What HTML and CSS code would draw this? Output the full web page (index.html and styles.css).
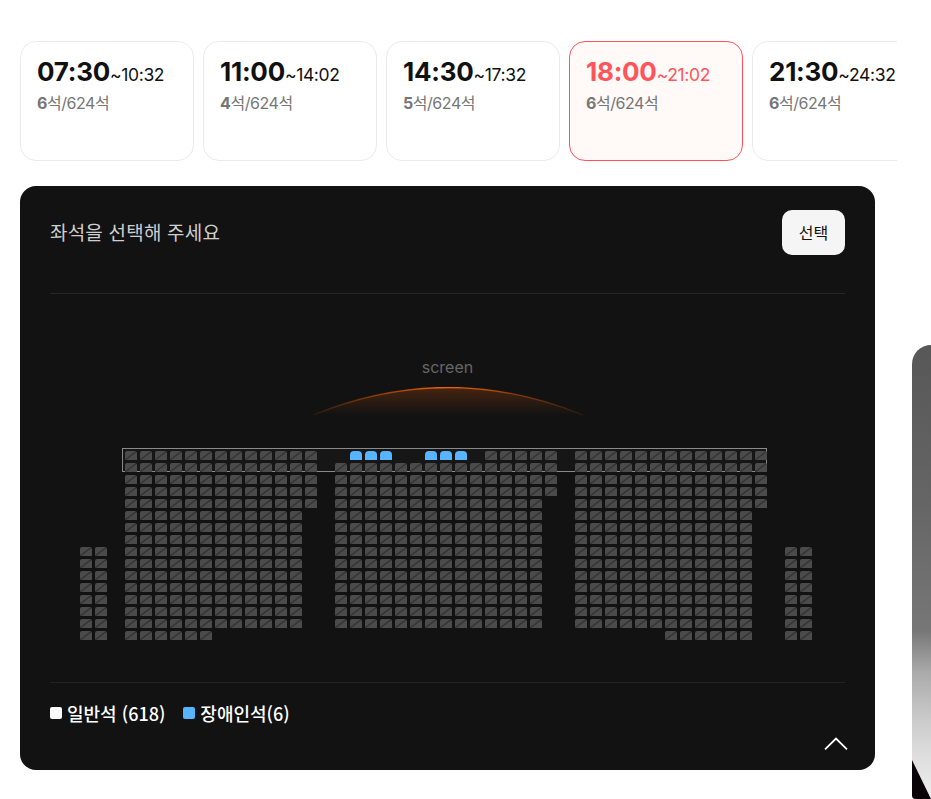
FILE: index.html
```html
<!DOCTYPE html>
<html lang="ko">
<head>
<meta charset="utf-8">
<title>좌석 선택</title>
<link rel="stylesheet" href="styles.css">
</head>
<body>
<div class="page">
  <main class="main">
    <div class="times">
      <div class="time"><p class="clock"><b>07:30</b><span>~10:32</span></p><p class="count"><b>6</b>석/624석</p></div>
      <div class="time"><p class="clock"><b>11:00</b><span>~14:02</span></p><p class="count"><b>4</b>석/624석</p></div>
      <div class="time"><p class="clock"><b>14:30</b><span>~17:32</span></p><p class="count"><b>5</b>석/624석</p></div>
      <div class="time active"><p class="clock"><b>18:00</b><span>~21:02</span></p><p class="count"><b>6</b>석/624석</p></div>
      <div class="time"><p class="clock"><b>21:30</b><span>~24:32</span></p><p class="count"><b>6</b>석/624석</p></div>
    </div>
    <section class="card">
      <header class="head">
        <h2>좌석을 선택해 주세요</h2>
        <button class="pick">선택</button>
      </header>
      <div class="hall">
        <p class="screen-label">screen</p>
        <svg class="screen" width="272" height="32" viewBox="0 0 272 32" aria-hidden="true">
          <defs>
            <linearGradient id="arc" x1="0" x2="1" y1="0" y2="0">
              <stop offset="0" stop-color="#e05a00" stop-opacity=".12"/>
              <stop offset=".25" stop-color="#d05508" stop-opacity=".6"/>
              <stop offset=".5" stop-color="#f86400"/>
              <stop offset=".75" stop-color="#d05508" stop-opacity=".6"/>
              <stop offset="1" stop-color="#e05a00" stop-opacity=".12"/>
            </linearGradient>
            <linearGradient id="glow" x1="0" x2="0" y1="0" y2="1">
              <stop offset="0" stop-color="#d85a10" stop-opacity=".26"/>
              <stop offset="1" stop-color="#d85a10" stop-opacity="0"/>
            </linearGradient>
          </defs>
          <path d="M1 28Q136 -27 271 28Z" fill="url(#glow)"/>
          <path d="M1 28Q136 -27 271 28" fill="none" stroke="url(#arc)" stroke-width="1.3"/>
        </svg>
        <div class="map">
          <div class="selection"></div>
          <div class="row"><i class="l"></i><i></i><i></i><i></i><i></i><i></i><i></i><i></i><i></i><i></i><i></i><i></i><i></i><i class="b a19"></i><i class="b"></i><i class="b"></i><i class="b a24"></i><i class="b"></i><i class="b"></i><i class="a28"></i><i></i><i></i><i></i><i></i><i class="r"></i><i></i><i></i><i></i><i></i><i></i><i></i><i></i><i></i><i></i><i></i><i></i><i></i></div>
          <div class="row"><i class="l"></i><i></i><i></i><i></i><i></i><i></i><i></i><i></i><i></i><i></i><i></i><i></i><i></i><i class="c"></i><i></i><i></i><i></i><i></i><i></i><i></i><i></i><i></i><i></i><i></i><i></i><i></i><i></i><i></i><i class="r"></i><i></i><i></i><i></i><i></i><i></i><i></i><i></i><i></i><i></i><i></i><i></i><i></i></div>
          <div class="row"><i class="l"></i><i></i><i></i><i></i><i></i><i></i><i></i><i></i><i></i><i></i><i></i><i></i><i></i><i class="c"></i><i></i><i></i><i></i><i></i><i></i><i></i><i></i><i></i><i></i><i></i><i></i><i></i><i></i><i></i><i class="r"></i><i></i><i></i><i></i><i></i><i></i><i></i><i></i><i></i><i></i><i></i><i></i><i></i></div>
          <div class="row"><i class="l"></i><i></i><i></i><i></i><i></i><i></i><i></i><i></i><i></i><i></i><i></i><i></i><i></i><i class="c"></i><i></i><i></i><i></i><i></i><i></i><i></i><i></i><i></i><i></i><i></i><i></i><i></i><i></i><i></i><i class="r"></i><i></i><i></i><i></i><i></i><i></i><i></i><i></i><i></i><i></i><i></i><i></i><i></i></div>
          <div class="row"><i class="l"></i><i></i><i></i><i></i><i></i><i></i><i></i><i></i><i></i><i></i><i></i><i></i><i></i><i class="c"></i><i></i><i></i><i></i><i></i><i></i><i></i><i></i><i></i><i></i><i></i><i></i><i></i><i></i><i class="r"></i><i></i><i></i><i></i><i></i><i></i><i></i><i></i><i></i><i></i><i></i><i></i><i></i></div>
          <div class="row"><i class="l"></i><i></i><i></i><i></i><i></i><i></i><i></i><i></i><i></i><i></i><i></i><i></i><i class="c"></i><i></i><i></i><i></i><i></i><i></i><i></i><i></i><i></i><i></i><i></i><i></i><i></i><i></i><i class="r"></i><i></i><i></i><i></i><i></i><i></i><i></i><i></i><i></i><i></i><i></i><i></i></div>
          <div class="row"><i class="l"></i><i></i><i></i><i></i><i></i><i></i><i></i><i></i><i></i><i></i><i></i><i></i><i class="c"></i><i></i><i></i><i></i><i></i><i></i><i></i><i></i><i></i><i></i><i></i><i></i><i></i><i></i><i class="r"></i><i></i><i></i><i></i><i></i><i></i><i></i><i></i><i></i><i></i><i></i><i></i></div>
          <div class="row"><i class="l"></i><i></i><i></i><i></i><i></i><i></i><i></i><i></i><i></i><i></i><i></i><i></i><i class="c"></i><i></i><i></i><i></i><i></i><i></i><i></i><i></i><i></i><i></i><i></i><i></i><i></i><i></i><i class="r"></i><i></i><i></i><i></i><i></i><i></i><i></i><i></i><i></i><i></i><i></i><i></i></div>
          <div class="row"><i></i><i></i><i class="l"></i><i></i><i></i><i></i><i></i><i></i><i></i><i></i><i></i><i></i><i></i><i></i><i class="c"></i><i></i><i></i><i></i><i></i><i></i><i></i><i></i><i></i><i></i><i></i><i></i><i></i><i></i><i class="r"></i><i></i><i></i><i></i><i></i><i></i><i></i><i></i><i></i><i></i><i></i><i></i><i class="s"></i><i></i></div>
          <div class="row"><i></i><i></i><i class="l"></i><i></i><i></i><i></i><i></i><i></i><i></i><i></i><i></i><i></i><i></i><i></i><i class="c"></i><i></i><i></i><i></i><i></i><i></i><i></i><i></i><i></i><i></i><i></i><i></i><i></i><i></i><i class="r"></i><i></i><i></i><i></i><i></i><i></i><i></i><i></i><i></i><i></i><i></i><i></i><i class="s"></i><i></i></div>
          <div class="row"><i></i><i></i><i class="l"></i><i></i><i></i><i></i><i></i><i></i><i></i><i></i><i></i><i></i><i></i><i></i><i class="c"></i><i></i><i></i><i></i><i></i><i></i><i></i><i></i><i></i><i></i><i></i><i></i><i></i><i></i><i class="r"></i><i></i><i></i><i></i><i></i><i></i><i></i><i></i><i></i><i></i><i></i><i></i><i class="s"></i><i></i></div>
          <div class="row"><i></i><i></i><i class="l"></i><i></i><i></i><i></i><i></i><i></i><i></i><i></i><i></i><i></i><i></i><i></i><i class="c"></i><i></i><i></i><i></i><i></i><i></i><i></i><i></i><i></i><i></i><i></i><i></i><i></i><i></i><i class="r"></i><i></i><i></i><i></i><i></i><i></i><i></i><i></i><i></i><i></i><i></i><i></i><i class="s"></i><i></i></div>
          <div class="row"><i></i><i></i><i class="l"></i><i></i><i></i><i></i><i></i><i></i><i></i><i></i><i></i><i></i><i></i><i></i><i class="c"></i><i></i><i></i><i></i><i></i><i></i><i></i><i></i><i></i><i></i><i></i><i></i><i></i><i></i><i class="r"></i><i></i><i></i><i></i><i></i><i></i><i></i><i></i><i></i><i></i><i></i><i></i><i class="s"></i><i></i></div>
          <div class="row"><i></i><i></i><i class="l"></i><i></i><i></i><i></i><i></i><i></i><i></i><i></i><i></i><i></i><i></i><i></i><i class="c"></i><i></i><i></i><i></i><i></i><i></i><i></i><i></i><i></i><i></i><i></i><i></i><i></i><i></i><i class="r"></i><i></i><i></i><i></i><i></i><i></i><i></i><i></i><i></i><i></i><i></i><i></i><i class="s"></i><i></i></div>
          <div class="row"><i></i><i></i><i class="l"></i><i></i><i></i><i></i><i></i><i></i><i></i><i></i><i></i><i></i><i></i><i></i><i class="c"></i><i></i><i></i><i></i><i></i><i></i><i></i><i></i><i></i><i></i><i></i><i></i><i></i><i></i><i class="r"></i><i></i><i></i><i></i><i></i><i></i><i></i><i></i><i></i><i></i><i></i><i></i><i class="s"></i><i></i></div>
          <div class="row"><i></i><i></i><i class="l"></i><i></i><i></i><i></i><i></i><i></i><i class="a40"></i><i></i><i></i><i></i><i></i><i></i><i class="s"></i><i></i></div>
        </div>
      </div>
      <footer class="legend">
        <span class="key"><em class="dot"></em>일반석 (618)</span>
        <span class="key"><em class="dot blue"></em>장애인석(6)</span>
      </footer>
      <div class="fold">
        <svg width="24" height="13" viewBox="0 0 24 13" aria-hidden="true"><path d="M1 12.3 12 1.5 23 12.3" fill="none" stroke="#fff" stroke-width="1.8"/></svg>
      </div>
    </section>
  </main>
  <aside class="peek">
    <svg class="peek-wedge" width="19" height="39" viewBox="0 0 19 39" aria-hidden="true"><path d="M0 0 19 39H0Z" fill="#0a0408"/></svg>
  </aside>
</div>
</body>
</html>
```
FILE: styles.css
```css
* { box-sizing: border-box; }
html, body { margin: 0; padding: 0; background: #fff; }
body {
  width: 931px;
  height: 799px;
  overflow: hidden;
  font-family: Inter, "Noto Sans CJK KR", sans-serif;
}
p, h2 { margin: 0; }

.page { display: flex; height: 799px; padding-left: 20px; overflow: hidden; }
.main { flex: none; width: 877px; padding-top: 41px; }

.times { display: flex; gap: 9px; overflow: hidden; }
.time {
  flex: none;
  width: 174px;
  height: 120px;
  padding: 18px 16px 0;
  border: 1px solid #ebebeb;
  border-radius: 16px;
  background: #fff;
  color: #111;
}
.clock { display: flex; align-items: baseline; height: 24px; line-height: 24px; white-space: nowrap; }
.clock b { font-size: 26px; font-weight: 700; letter-spacing: -.25px; }
.clock span { font-size: 17.5px; font-weight: 400; letter-spacing: -.35px; }
.count { margin-top: 8px; font-size: 16px; line-height: 22px; color: #767676; letter-spacing: -.45px; }
.count b { font-weight: 700; }
.time.active { border-color: #ff545a; background: #fff9f8; color: #ff545a; }
.time.active .count { color: #767676; }

.card {
  margin-top: 25px;
  width: 855px;
  height: 584px;
  padding: 24px 30px 0;
  border-radius: 16px;
  background: #121212;
}
.head {
  display: flex;
  justify-content: space-between;
  align-items: center;
  height: 84px;
  padding-bottom: 39px;
  border-bottom: 1px solid #262626;
}
.head h2 {
  padding-bottom: 2px;
  font-size: 19px;
  font-weight: 400;
  line-height: 43px;
  letter-spacing: .2px;
  color: #cfcfcf;
  font-family: "Noto Sans CJK KR", sans-serif;
}
.pick {
  width: 63px;
  height: 45px;
  padding: 0;
  border: 0;
  border-radius: 10px;
  background: #f5f5f5;
  color: #111;
  font: 400 16px "Noto Sans CJK KR", sans-serif;
}

.hall {
  display: flex;
  flex-direction: column;
  align-items: center;
  height: 389px;
  padding-top: 62px;
  border-bottom: 1px solid #222;
}
.screen-label { height: 22px; font-size: 16px; line-height: 22px; color: #666; }
.screen { display: block; margin-top: 9px; }

.map {
  position: relative;
  align-self: flex-start;
  margin: 32px 0 0 30px;
  width: 732px;
  display: flex;
  flex-direction: column;
  gap: 3px;
}
.selection {
  position: absolute;
  left: 42px;
  top: -3px;
  width: 645px;
  height: 24px;
  border: 1px solid #8a8a8a;
  background: #161616;
}
.row {
  position: relative;
  display: grid;
  grid-template-columns: repeat(49, 12px);
  column-gap: 3px;
  height: 9px;
}
.row i {
  display: block;
  height: 9px;
  border-radius: 2px 2px 0 0;
  background: linear-gradient(to bottom right, #4b4b4b 41%, #303030 50%, #4b4b4b 59%);
}
.row i.b { background: #58b4ff; border-radius: 4px 4px 0 0; }
.row i.l { grid-column-start: 4; }
.row i.c { grid-column-start: 18; }
.row i.r { grid-column-start: 34; }
.row i.s { grid-column-start: 48; }
.row i.a19 { grid-column-start: 19; }
.row i.a24 { grid-column-start: 24; }
.row i.a28 { grid-column-start: 28; }
.row i.a40 { grid-column-start: 40; }

.legend {
  display: flex;
  gap: 18px;
  height: 34px;
  margin-top: 13px;
  align-items: center;
  font-family: "Noto Sans CJK KR", sans-serif;
  font-size: 18px;
  font-weight: 500;
  color: #fff;
}
.key { display: flex; align-items: center; gap: 5px; white-space: nowrap; }
.dot { flex: none; width: 12px; height: 12px; border-radius: 2px; background: #fff; }
.dot.blue { background: #58b4ff; }
.fold { display: flex; justify-content: flex-end; margin: 7px -3px 0 0; }
.fold svg { display: block; }

.peek {
  position: relative;
  flex: none;
  width: 19px;
  height: 454px;
  margin: 345px 0 0 15px;
  border-radius: 20px 0 0 4px;
  overflow: hidden;
  background: linear-gradient(#575757 0, #666 36%, #777 63%, #aaa 72%, #ccc 83%, #ddd 90%, #eee 100%);
}
.peek-wedge { position: absolute; left: 0; bottom: 0; display: block; }
```
